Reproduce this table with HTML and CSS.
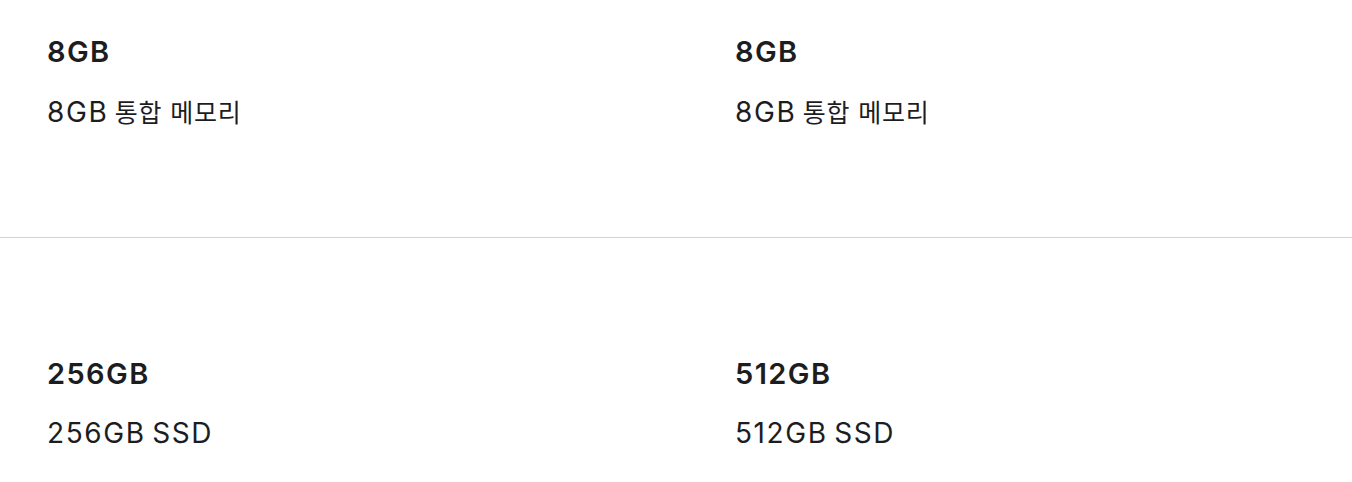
FILE: index.html
```html
<!DOCTYPE html>
<html lang="ko">
<head>
<meta charset="utf-8">
<link rel="stylesheet" href="styles.css">
</head>
<body>
<section class="row row-first">
  <div class="col">
    <h3 class="title">8GB</h3>
    <p class="desc">8GB <span class="ko">통합 메모리</span></p>
  </div>
  <div class="col">
    <h3 class="title">8GB</h3>
    <p class="desc">8GB <span class="ko">통합 메모리</span></p>
  </div>
</section>
<section class="row row-second">
  <div class="col">
    <h3 class="title">256GB</h3>
    <p class="desc">256GB SSD</p>
  </div>
  <div class="col">
    <h3 class="title">512GB</h3>
    <p class="desc">512GB SSD</p>
  </div>
</section>
</body>
</html>
```

FILE: styles.css
```css
html, body {
  margin: 0;
  padding: 0;
  background: #fff;
}
body {
  font-family: Inter, "Noto Sans CJK KR", sans-serif;
  color: #1d1d1f;
  width: 1352px;
  height: 482px;
  overflow: hidden;
}
.row {
  display: grid;
  grid-template-columns: 688px 1fr;
  padding: 0 0 0 47px;
}
.row-first {
  padding-top: 34px;
  height: 203px;
  border-bottom: 1px solid #d2d2d7;
}
.row-second {
  padding-top: 118px;
}
.title {
  margin: 0;
  font-size: 29px;
  line-height: 36px;
  font-weight: 600;
  letter-spacing: 1.4px;
}
.desc {
  margin: 25px 0 0;
  font-size: 28px;
  line-height: 32px;
  font-weight: 400;
  letter-spacing: 1.6px;
  word-spacing: -3px;
}
.ko {
  font-family: "Noto Sans CJK KR", sans-serif;
  font-size: 25px;
  letter-spacing: 0.8px;
  word-spacing: 0;
}
```
